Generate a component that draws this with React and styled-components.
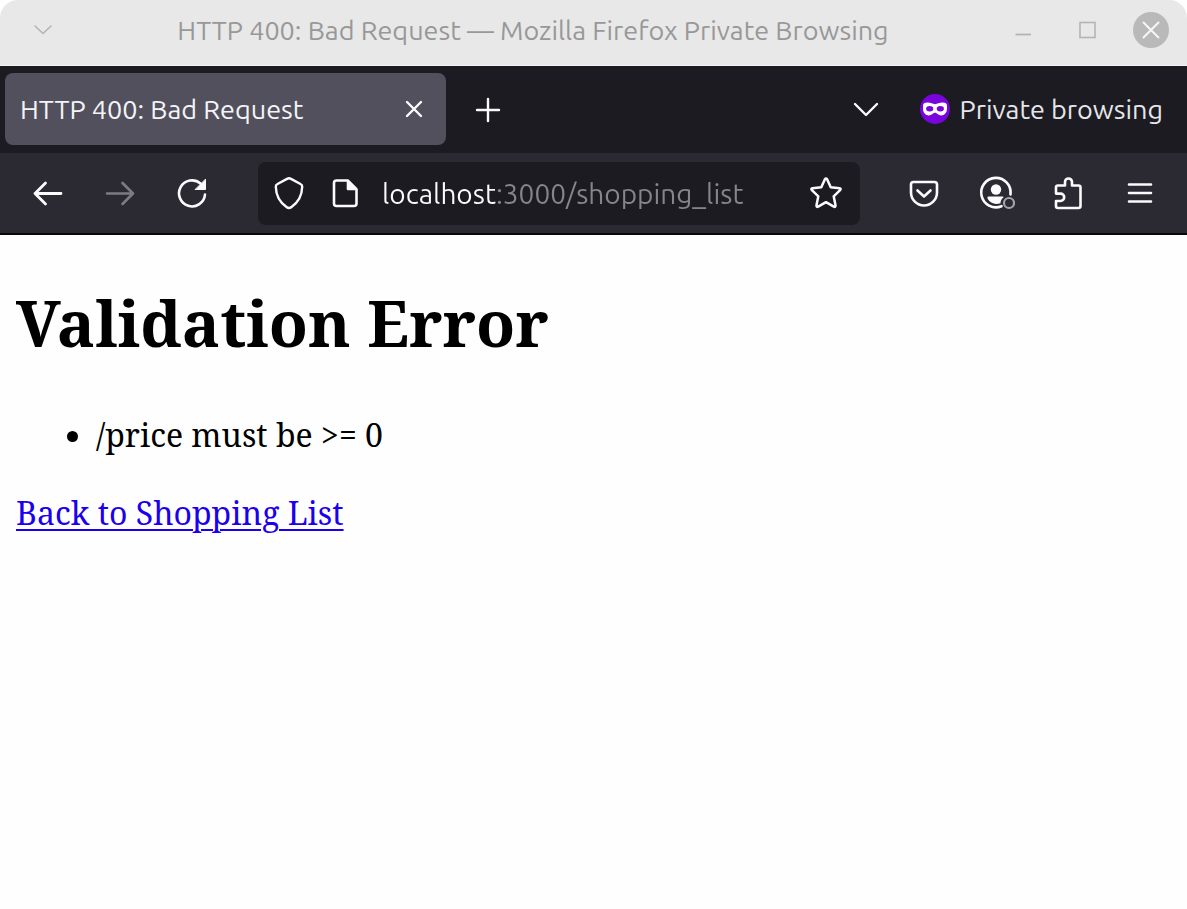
import React from "react";
import styled, { createGlobalStyle } from "styled-components";

const GlobalStyle = createGlobalStyle`
  *, *::before, *::after { box-sizing: border-box; }
  body { margin: 0; background: #fff; }
`;

const uiFont = `Ubuntu, "Noto Sans", "Open Sans", sans-serif`;

const Window = styled.div`
  min-height: 100vh;
  display: flex;
  flex-direction: column;
  background: #fefefe;
  font-family: ${uiFont};
`;

const TitleBar = styled.header`
  display: flex;
  align-items: center;
  height: 66px;
  padding: 0 18px 6px 25px;
  background: #e8e8e8;
  border-bottom: 1px solid #f4f4f4;
  border-radius: 18px 18px 0 0;
`;

const WindowTitle = styled.div`
  flex: 1;
  text-align: center;
  font-size: 27px;
  line-height: 36px;
  color: #989898;
  white-space: nowrap;
`;

const WindowControls = styled.div`
  display: flex;
  gap: 28px;
`;

const IconButton = styled.button`
  display: flex;
  align-items: center;
  justify-content: center;
  flex: none;
  width: ${(p) => p.$width}px;
  height: ${(p) => p.$width}px;
  padding: 0;
  border: 0;
  border-radius: ${(p) => (p.$round ? "50%" : "8px")};
  background: ${(p) => p.$fill || "transparent"};
  color: ${(p) => p.$color || "#fbfbfe"};
`;

const TabStrip = styled.nav`
  display: flex;
  align-items: center;
  height: 87px;
  padding: 0 24px 1px 5px;
  background: #1c1b22;
`;

const Tab = styled.div`
  display: flex;
  align-items: center;
  justify-content: space-between;
  width: 441px;
  height: 72px;
  padding: 0 8px 0 15px;
  border-radius: 8px;
  background: #52505c;
  color: #f4f4f8;
  font-size: 27px;
  line-height: 36px;
  white-space: nowrap;
`;

const NewTab = styled.div`
  flex: 1;
  padding-left: 18px;
`;

const PrivateBadge = styled.div`
  display: flex;
  align-items: center;
  gap: 10px;
  margin-left: 30px;
  color: #e6e6ea;
  font-size: 27px;
  line-height: 36px;
  white-space: nowrap;
`;

const ToolBar = styled.div`
  display: flex;
  align-items: center;
  gap: 8px;
  height: 82px;
  padding: 0 15px 0 16px;
  background: #2b2a33;
  border-bottom: 2px solid #09090c;
`;

const AddressBar = styled.div`
  display: flex;
  align-items: center;
  flex: 1;
  min-width: 0;
  height: 63px;
  margin: 0 24px 0 26px;
  padding: 0 6px 0 3px;
  border-radius: 8px;
  background: #1c1b22;
`;

const AddressInput = styled.input`
  flex: 1;
  min-width: 0;
  height: 40px;
  margin-left: 9px;
  padding: 0;
  border: 0;
  outline: 0;
  font-family: ${uiFont};
  font-size: 28px;
  color: #85858c;
  background: linear-gradient(to right, #fbfbfe 114px, #85858c 114px);
  background-clip: text;
  -webkit-background-clip: text;
  -webkit-text-fill-color: transparent;
`;

const Page = styled.main`
  flex: 1;
  padding: 44px 16px;
  font-family: "Noto Serif", "DejaVu Serif Condensed", "DejaVu Serif", serif;
  font-size: 32px;
  line-height: 44px;
  color: #000;
`;

const Heading = styled.h1`
  margin: 0 0 46px;
  font-size: 64px;
  line-height: 88px;
  font-weight: 700;
`;

const ErrorList = styled.ul`
  margin: 0 0 34px;
  padding-left: 80px;
`;

const BackLink = styled.a`
  color: #1a00ee;
  text-decoration: underline;
  text-decoration-thickness: 2px;
  text-underline-offset: 4px;
`;

const Icon = ({ size = 36, width = 2.4, children }) => (
  <svg
    width={size}
    height={size}
    viewBox={`0 0 ${size} ${size}`}
    fill="none"
    stroke="currentColor"
    strokeWidth={width}
    strokeLinecap="round"
    strokeLinejoin="round"
    aria-hidden="true"
  >
    {children}
  </svg>
);

const MaskIcon = () => (
  <svg width="30" height="30" viewBox="0 0 30 30" aria-hidden="true">
    <circle cx="15" cy="15" r="15" fill="#7a05dc" />
    <path
      fill="#fff"
      d="M3 12C3 9.500 4.500 8.600 7.500 8.600C11 8.600 12.500 10.200 15 10.200S19 8.600 22.500 8.600C25.500 8.600 27 9.500 27 12V14.500C27 18.800 24.500 21.400 21.200 21.400C18 21.400 17 18.800 15 18.800S12 21.400 8.800 21.400C5.500 21.400 3 18.800 3 14.500Z"
    />
    <ellipse cx="9.700" cy="14.700" rx="3.600" ry="2.700" fill="#7a05dc" />
    <ellipse cx="20.300" cy="14.700" rx="3.600" ry="2.700" fill="#7a05dc" />
  </svg>
);

export default function App() {
  return (
    <Window>
      <GlobalStyle />
      <TitleBar>
        <IconButton $width={36} $color="#b4b4b4" aria-label="Window menu">
          <Icon width={1.6}><path d="M10 14L18 21.500L26 14" /></Icon>
        </IconButton>
        <WindowTitle>HTTP 400: Bad Request — Mozilla Firefox Private Browsing</WindowTitle>
        <WindowControls>
          <IconButton $width={36} $color="#b4b4b4" aria-label="Minimize">
            <Icon width={1.8}><path d="M10.500 22.500H26" strokeLinecap="butt" /></Icon>
          </IconButton>
          <IconButton $width={36} $color="#b4b4b4" aria-label="Maximize">
            <Icon width={1.6}><rect x="11" y="10.500" width="15" height="15" strokeLinejoin="miter" /></Icon>
          </IconButton>
          <IconButton $width={36} $round $fill="#b9b9b9" $color="#f6f6f6" aria-label="Close window">
            <Icon width={2}><path d="M10.500 10.500L25.500 25.500M25.500 10.500L10.500 25.500" /></Icon>
          </IconButton>
        </WindowControls>
      </TitleBar>

      <TabStrip aria-label="Tabs">
        <Tab>
          <span>HTTP 400: Bad Request</span>
          <IconButton $width={48} aria-label="Close tab">
            <Icon><path d="M11 11L25 25M25 11L11 25" /></Icon>
          </IconButton>
        </Tab>
        <NewTab>
          <IconButton $width={48} aria-label="New tab">
            <Icon><path d="M7 19H29M18 8V30" /></Icon>
          </IconButton>
        </NewTab>
        <IconButton $width={48} aria-label="List all tabs">
          <Icon><path d="M7 13L18 24L29 13" /></Icon>
        </IconButton>
        <PrivateBadge>
          <MaskIcon />
          <span>Private browsing</span>
        </PrivateBadge>
      </TabStrip>

      <ToolBar>
        <IconButton $width={64} aria-label="Back">
          <Icon width={2.8}><path d="M31 18.500H5M15.500 8L5 18.500L15.500 29" /></Icon>
        </IconButton>
        <IconButton $width={64} $color="#7b7b80" aria-label="Forward" disabled>
          <Icon width={2.6}><path d="M5 18.500H31M20.500 8L31 18.500L20.500 29" /></Icon>
        </IconButton>
        <IconButton $width={64} aria-label="Reload">
          <Icon width={2.6}>
            <path d="M31 19.500A13 13 0 1 1 26.500 8.500" />
            <path d="M31.500 4.500V14.500H21.500Z" fill="currentColor" strokeWidth="1" />
          </Icon>
        </IconButton>

        <AddressBar>
          <IconButton $width={56} aria-label="Tracking protection">
            <Icon>
              <path d="M18 3.200Q19 3.200 20 3.900L29.500 9Q31.300 9.800 31.200 11.800C31 20 28.500 26.500 20.500 32Q18 34 15.500 32C7.500 26.500 5 20 4.800 11.800Q4.700 9.800 6.500 9L16 3.900Q17 3.200 18 3.200Z" />
            </Icon>
          </IconButton>
          <IconButton $width={56} aria-label="Site information">
            <Icon width={2.6}>
              <path d="M9.500 5.500H20.500L29.500 14.500V28.500Q29.500 31 27 31H9.500Q7 31 7 28.500V8Q7 5.500 9.500 5.500Z" />
              <path d="M21 6V14H29Z" fill="currentColor" />
            </Icon>
          </IconButton>
          <AddressInput aria-label="Address" defaultValue="localhost:3000/shopping_list" spellCheck={false} />
          <IconButton $width={56} aria-label="Bookmark this page">
            <Icon width={2.5}>
              <path d="M16.900 4.200Q18 2.600 19.100 4.200L22.700 12.300L31.500 13.300Q33.400 13.700 32.100 15.200L25.700 21.300L27.500 30.300Q27.600 32.400 25.800 31.700L18 27.200L10.200 31.700Q8.400 32.400 8.500 30.300L10.300 21.300L3.900 15.200Q2.600 13.700 4.500 13.300L13.300 12.300Z" />
            </Icon>
          </IconButton>
        </AddressBar>

        <IconButton $width={64} aria-label="Save to Pocket">
          <Icon width={2.6}>
            <path d="M7.500 7H28.500Q31 7 31 9.500V17.500A13 13 0 0 1 5 17.500V9.500Q5 7 7.500 7Z" />
            <path d="M11.500 15.500L18 21.500L24.500 15.500" />
          </Icon>
        </IconButton>
        <IconButton $width={64} aria-label="Account">
          <Icon size={38} width={2.6}>
            <path d="M24.500 32.200A14.700 14.700 0 1 1 33.500 20.500" />
            <circle cx="19" cy="15.500" r="5.200" fill="currentColor" stroke="none" />
            <path d="M11.500 22.500H25.500Q26.500 22.500 26.500 23.500Q23.500 25.500 23.500 29.200C18 31 13.500 29.500 10.500 24.500Q10 22.500 11.500 22.500Z" fill="currentColor" stroke="none" />
            <circle cx="32" cy="29" r="5" stroke="#a3a2aa" strokeWidth="2.200" />
          </Icon>
        </IconButton>
        <IconButton $width={64} aria-label="Extensions">
          <Icon width={2.6}>
            <path d="M8 10.500H15V7A3.500 3.500 0 0 1 22 7V10.500H28.500Q30.500 10.500 30.500 12.500V31Q30.500 33 28.500 33H8Q6 33 6 31V26H10.500A3.700 3.700 0 0 0 10.500 18.600H6V12.500Q6 10.500 8 10.500" />
          </Icon>
        </IconButton>
        <IconButton $width={64} aria-label="Open application menu">
          <Icon width={2.6}><path d="M7 9.500H29M7 18H29M7 26.500H29" /></Icon>
        </IconButton>
      </ToolBar>

      <Page>
        <Heading>Validation Error</Heading>
        <ErrorList>
          <li>/price must be &gt;= 0</li>
        </ErrorList>
        <BackLink href="/shopping_list">Back to Shopping List</BackLink>
      </Page>
    </Window>
  );
}
